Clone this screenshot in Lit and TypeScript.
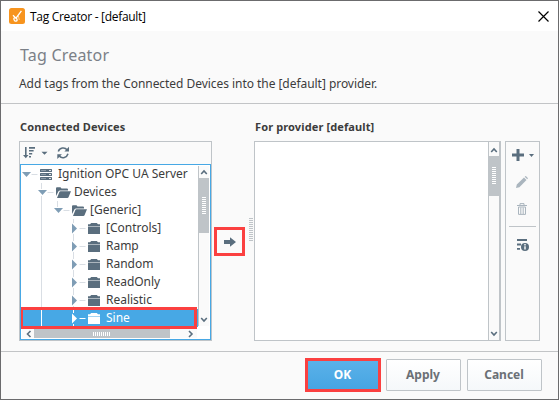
import { LitElement, html, css, svg } from "lit";
import { customElement, property } from "lit/decorators.js";

interface TreeNode {
  label: string;
  level: number;
  icon: "server" | "open" | "folder";
  selected?: boolean;
}

const NODES: TreeNode[] = [
  { label: "Ignition OPC UA Server", level: 0, icon: "server" },
  { label: "Devices", level: 1, icon: "open" },
  { label: "[Generic]", level: 2, icon: "open" },
  { label: "[Controls]", level: 3, icon: "folder" },
  { label: "Ramp", level: 3, icon: "folder" },
  { label: "Random", level: 3, icon: "folder" },
  { label: "ReadOnly", level: 3, icon: "folder" },
  { label: "Realistic", level: 3, icon: "folder" },
  { label: "Sine", level: 3, icon: "folder", selected: true },
];

const nodeIcon = (kind: TreeNode["icon"]) => {
  if (kind === "server") {
    return svg`<g fill="#5a6e7e"><rect x="0" y="0" width="12" height="3" rx=".5"/><rect x="0" y="4" width="12" height="3" rx=".5"/><rect x="0" y="8" width="12" height="3" rx=".5"/></g>
      <path d="M1 1.5h5M1 5.5h5M1 9.5h5" stroke="#8c9aa6" stroke-width="1"/><path d="M9 1.5h2M9 5.5h2M9 9.5h2" stroke="#dfe4e8" stroke-width="1"/>`;
  }
  if (kind === "open") {
    return svg`<path fill="#5a6e7e" d="M0 9V1.2Q0 .2 1 .2H4.5L5.5 1.5H11Q12 1.5 12 2.5V3.4H4Q3 3.4 2.5 4.3ZM1 11L3.4 5Q3.7 4.3 4.5 4.3H15L12.5 10.3Q12.2 11 11.3 11Z"/>`;
  }
  return svg`<path fill="currentColor" d="M0 1.2H2L3.2 0H8.8L10 1.2H12V3H0ZM0 3.6H12V11H0Z"/>`;
};

@customElement("tag-tree")
export class TagTree extends LitElement {
  static styles = css`
    :host { display: block; overflow: hidden; background: #fff; padding-left: 1px; }
    .row { height: 18px; display: flex; align-items: center; font-size: 12px; line-height: 18px; letter-spacing: -0.02px; color: #3c3c3c; white-space: pre; }
    .selected { background: #47a8e5; color: #fff; margin-left: -1px; padding-left: 1px; }
    .guides { flex: none; height: 18px; display: block; }
    .icon { flex: none; height: 11px; width: 16px; margin-top: 1px; color: #5a6e7e; overflow: visible; }
    .selected .icon { color: #fff; }
    .label { margin-left: 2px; }
  `;

  private guides(n: TreeNode) {
    const w = 18 + n.level * 16;
    const x = 4.5 + n.level * 16;
    const line = n.selected ? "#fff" : "#d9dee4";
    return svg`<svg class="guides" width=${w} height="18" viewBox="0 0 ${w} 18">
      <path fill="none" stroke=${line} d="M${x + 5} 9.5h6"/>
      ${n.level > 0 ? svg`<path stroke=${line} d="M19.5 0V${n.level > 1 ? 18 : 6}${n.level === 1 ? "M19.5 13V18" : ""}"/>` : ""}
      ${n.level === 2 ? svg`<path stroke=${line} d="M35.5 0V6"/>` : ""}
      ${n.level === 3 ? svg`<path stroke=${line} d="M51.5 0V4M51.5 15V18"/>` : ""}
      ${n.level < 3
        ? svg`<path fill="#7f9db5" d="M${x - 4.5} 7h9l-4.5 5z"/>`
        : svg`<path fill=${n.selected ? "#fff" : "#7f9db5"} d="M50 4.5v10l5-5z"/>`}
    </svg>`;
  }

  render() {
    return NODES.map((n) => html`<div class="row ${n.selected ? "selected" : ""}">
      ${this.guides(n)}<svg class="icon">${nodeIcon(n.icon)}</svg><span class="label">${n.label}</span>
    </div>`);
  }
}

@customElement("scroll-bar")
export class ScrollBar extends LitElement {
  @property({ type: Boolean, reflect: true }) horizontal = false;
  static styles = css`
    :host { display: flex; flex-direction: column; width: 10px; border-left: 1px solid #bfc4c8; background: #fafafa; }
    :host([horizontal]) { flex-direction: row; width: auto; height: 10px; border-left: 0; }
    .btn { flex: none; width: 10px; height: 12px; display: block; }
    :host([horizontal]) .btn { width: 12px; height: 10px; }
    .thumb { flex: none; height: var(--thumb); margin-left: -1px; background: #bfc4c8; display: flex; align-items: center; justify-content: center; }
    :host([horizontal]) .thumb { height: auto; width: var(--thumb); margin: 0; }
    .grip { width: 4px; height: 17px; margin-bottom: 1px; background: repeating-linear-gradient(#fff 0 1px, transparent 1px 2px); }
    :host([horizontal]) .grip { width: 17px; height: 4px; margin: 0 1px 0 0; background: repeating-linear-gradient(90deg, #fff 0 1px, transparent 1px 2px); }
    .rest { flex: 1; }
    path { fill: none; stroke: #5a6e7e; stroke-width: 1.6; }
  `;
  render() {
    return this.horizontal
      ? html`<svg class="btn"><path d="M8.5 2L5.5 5l3 3"/></svg><div class="thumb"><div class="grip"></div></div><div class="rest"></div><svg class="btn"><path d="M4 2l3 3-3 3"/></svg>`
      : html`<svg class="btn"><path d="M2.2 8L5 5l2.8 3"/></svg><div class="thumb"><div class="grip"></div></div><div class="rest"></div><svg class="btn"><path d="M2.2 4L5 7l2.8-3"/></svg>`;
  }
}

@customElement("app-root")
export class AppRoot extends LitElement {
  static styles = css`
    * { box-sizing: border-box; }
    :host { display: block; width: 559px; height: 400px; font-family: "Noto Sans", sans-serif; font-size: 12px; color: #3c3c3c; }
    svg { display: block; flex: none; }
    .window { width: 559px; height: 400px; border: 1px solid #6b6b6d; background: #fafafa; display: flex; flex-direction: column; overflow: hidden; }
    .titlebar { height: 30px; background: #fff; display: flex; align-items: center; padding: 0 9px 0 8px; flex: none; }
    .title { margin-left: 5px; color: #000; flex: 1; font-family: "Open Sans", "Noto Sans", sans-serif; font-size: 12px; letter-spacing: -0.3px; }
    .header { height: 73px; border-bottom: 1px solid #c2c4c6; padding: 13px 18px 0; flex: none; }
    .heading { font-size: 16px; line-height: 22px; letter-spacing: 0.2px; color: #7b8087; margin: 0 0 0 1px; font-weight: 400; }
    .sub { line-height: 18px; letter-spacing: -0.045px; margin: 9px 0 0; white-space: nowrap; }
    .main { height: 248px; border-bottom: 1px solid #c2c4c6; padding: 14px 18px 0; display: flex; flex: none; }
    .column { display: flex; flex-direction: column; }
    .caption { height: 23px; line-height: 18px; font-weight: 700; font-size: 11px; letter-spacing: 0.12px; padding-left: 1px; white-space: nowrap; }
    .panel { height: 200px; border: 1px solid #bfc4c8; display: flex; flex-direction: column; }
    .devices { width: 193px; }
    .sortbar { height: 22px; display: flex; align-items: center; padding-left: 3px; flex: none; }
    .treebox { position: relative; flex: 1; border: 1px solid #47a8e5; display: grid; grid-template: 163px 11px / 177px 12px; background: #fff; overflow: hidden; }
    .vbar { --thumb: 55px; margin: 1px 1px 0 0; height: 160px; width: 11px; box-sizing: border-box; }
    .hbar { --thumb: 136px; margin: 1px 1px 0; height: 9px; }
    .mark { position: absolute; left: -1px; top: 142px; width: 177px; height: 22px; border: 3px solid #fb4040; }
    .transfer { width: 42px; display: flex; padding: 109px 0 0 2px; }
    .move { width: 31px; height: 29px; border: 3px solid #fb4040; display: flex; align-items: center; justify-content: center; }
    .splitter { width: 4px; height: 23px; margin: -9px 0 0 4px; background: repeating-linear-gradient(#bfc4c8 0 1px, transparent 1px 2px); }
    .provider { width: 247px; background: #fff; flex-direction: row; border-right-width: 2px; }
    .empty { flex: 1; }
    .pbar { --thumb: 40px; width: 11px; padding-top: 2px; box-sizing: border-box; }
    .tools { width: 35px; margin: 23px 0 0 4px; align-items: center; }
    .add { display: flex; align-items: center; gap: 5px; margin: 7px 0 0 6px; align-self: flex-start; }
    .pencil { margin: 15px 0 0 10px; align-self: flex-start; }
    .trash { margin: 15px 0 0 11px; align-self: flex-start; }
    .rule { width: 27px; height: 1px; background: #bfc4c8; margin-top: 11px; }
    .info { margin: 12px 0 0 11px; align-self: flex-start; }
    .footer { flex: 1; display: flex; justify-content: flex-end; padding: 7px 16px 0 0; }
    .button { width: 75px; height: 32px; border: 1px solid #bfc4c8; border-radius: 1px; background: linear-gradient(#fff, #f5f8fa); color: #6b7076; font: 700 12px "Noto Sans", sans-serif; padding: 0 1px 2px 0; margin-left: 6px; }
    .primary { width: 76px; height: 34px; margin: -1px -1px 0 0; border: 3px solid #fb4040; background: linear-gradient(#5ab1e9, #47a5e2); color: #fff; border-radius: 0; }
  `;

  render() {
    return html`<div class="window">
      <div class="titlebar">
        <svg width="16" height="16"><rect width="16" height="16" rx="2.5" fill="#f7941e"/><path d="M4 7.2L7 10.2 12.4 2.8M7.2 9.6Q4.2 9.2 5 11.6T8 12.6Q8.5 11.6 7.4 10" fill="none" stroke="#fff" stroke-width="1.3"/><path d="M9.3 7.5l1 4.5" stroke="#ffe2bd" stroke-width=".8"/></svg>
        <div class="title">Tag Creator - [default]</div>
        <svg width="11" height="11"><path d="M.5.5l10 10M10.5.5l-10 10" stroke="#000" stroke-width="1.2"/></svg>
      </div>
      <div class="header">
        <h1 class="heading">Tag Creator</h1>
        <p class="sub">Add tags from the Connected Devices into the [default] provider.</p>
      </div>
      <div class="main">
        <div class="column">
          <div class="caption">Connected Devices</div>
          <div class="panel devices">
            <div class="sortbar">
              <svg width="46" height="14"><g fill="#5a6e7e"><path d="M2 1h1.6v8H5.5L2.8 12.3 0 9h2zM6 1h6v1.7H6zM6 4h4.6v1.6H6zM6 7h3.2v1.6H6zM6 10h2v1.6H6zM18.5 5.8h6L21.5 8.8z"/></g>
                <path d="M35.3 5.4A5.2 5.2 0 0 1 44.2 3.9M45 7.8A5.2 5.2 0 0 1 36.3 10.1" fill="none" stroke="#5a6e7e" stroke-width="1.5"/><path d="M46 .8v4.7h-4.6zM34.3 13V8.3h4.6z" fill="#5a6e7e"/></svg>
            </div>
            <div class="treebox">
              <tag-tree></tag-tree>
              <scroll-bar class="vbar"></scroll-bar>
              <scroll-bar class="hbar" horizontal></scroll-bar>
              <div class="mark"></div>
            </div>
          </div>
        </div>
        <div class="transfer">
          <div class="move"><svg width="12" height="10"><path d="M0 3h6V.2L12 5 6 9.8V7H0z" fill="#5a6e7e"/></svg></div>
          <div class="splitter"></div>
        </div>
        <div class="column">
          <div class="caption">For provider [default]</div>
          <div class="panel provider"><div class="empty"></div><scroll-bar class="pbar"></scroll-bar></div>
        </div>
        <div class="panel tools">
          <div class="add"><svg width="12" height="12"><path d="M6 0v12M0 6h12" stroke="#5a6e7e" stroke-width="3"/></svg><svg width="5" height="3"><path d="M0 0h5L2.5 3z" fill="#5a6e7e"/></svg></div>
          <svg class="pencil" width="12" height="12"><path d="M0 12l.8-3.4L8 1.5 10.5 4 3.4 11.2zM8.7.8L9.5 0Q10 0 12 2.3L11.2 3.3z" fill="#aab5be"/></svg>
          <svg class="trash" width="10" height="12"><path d="M0 2.5h10M3 2V.6h4V2M1.5 4v7.4h7V4zM3.8 4.5V11M6.2 4.5V11" fill="none" stroke="#aab5be" stroke-width="1"/></svg>
          <div class="rule"></div>
          <svg class="info" width="12" height="12"><path d="M0 1h10M0 5.5h4M0 9.8h3" stroke="#5a6e7e" stroke-width="1.8"/><circle cx="8" cy="8" r="4" fill="#5a6e7e"/><path d="M8 5v1.4M8 7.2v3.2" stroke="#fff" stroke-width="1.4"/></svg>
        </div>
      </div>
      <div class="footer">
        <button class="button primary">OK</button><button class="button">Apply</button><button class="button">Cancel</button>
      </div>
    </div>`;
  }
}
